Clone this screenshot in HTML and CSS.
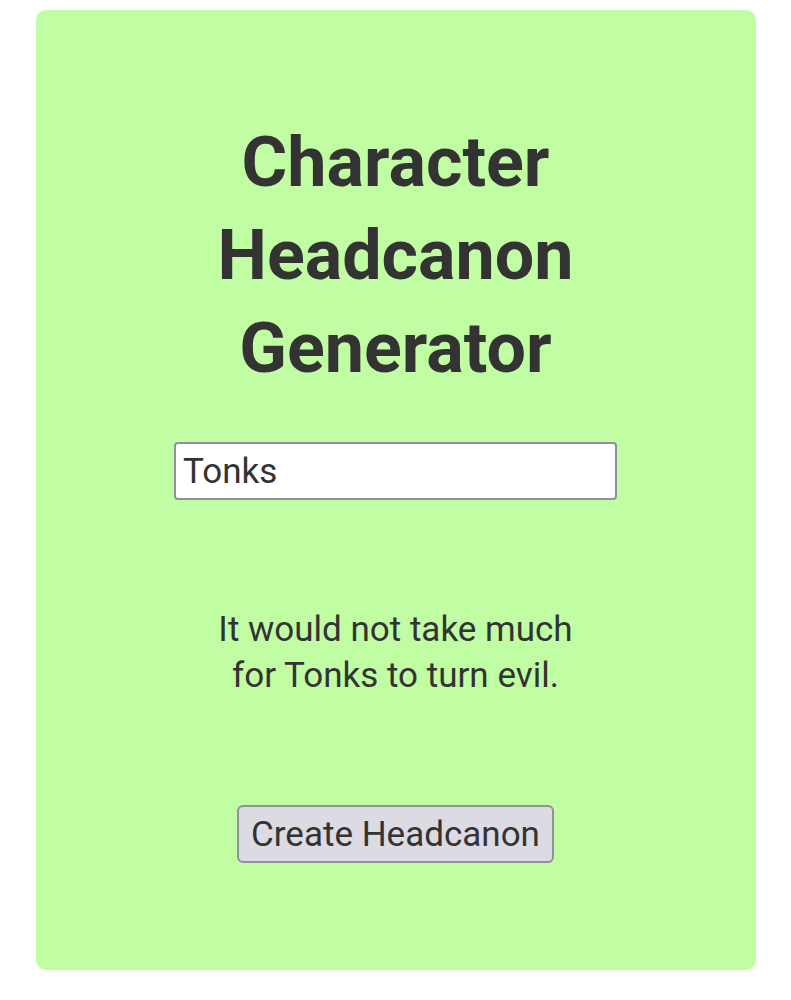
FILE: index.html
```html
<!DOCTYPE html>
<html lang="en">
<head>
<meta charset="UTF-8" />
<meta name="viewport" content="width=device-width, initial-scale=1" />
<title>Character Headcanon Generator</title>
<link rel="stylesheet" href="styles.css">
</head>
<body>

<main class="card">
  <h1>Character Headcanon Generator</h1>

  <input type="text" id="nameInput" value="Tonks" autocomplete="off" />

  <p id="headcanon" class="headcanon">It would not take much for Tonks to turn evil.</p>

  <button id="createBtn" class="create-btn">Create Headcanon</button>
</main>

</body>
</html>
```

FILE: styles.css
```css
body {
  font-family: Roboto, "Liberation Sans", sans-serif;
  background: #ffffff;
  margin: 0;
  padding: 10px 0 32px;
  color: #333333;
}
.card {
  width: 720px;
  margin: 0 auto;
  box-sizing: border-box;
  background: #c0fda3;
  border-radius: 10px;
  padding: 106px 0 107px;
  display: flex;
  flex-direction: column;
  align-items: center;
}
h1 {
  width: 400px;
  margin: 0 0 47px;
  font-size: 70px;
  line-height: 93px;
  font-weight: 700;
  text-align: center;
}
#nameInput {
  width: 443px;
  height: 58px;
  box-sizing: border-box;
  padding: 0 7px;
  font-family: inherit;
  font-size: 35px;
  color: #333333;
  background: white;
  border: 2px solid #8f8f9d;
  border-radius: 4px;
}
.headcanon {
  max-width: 390px;
  margin: 107px 0 106px;
  font-size: 35px;
  line-height: 46px;
  text-align: center;
}
.create-btn {
  height: 58px;
  padding: 0 12px;
  font-family: inherit;
  font-size: 35px;
  color: #333333;
  background: #dcdbe3;
  border: 2px solid #8f8f9d;
  border-radius: 6px;
  cursor: pointer;
}
```
